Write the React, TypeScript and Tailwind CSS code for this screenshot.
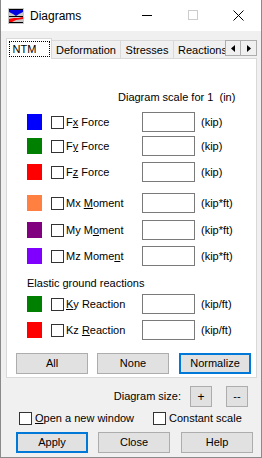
import React from "react";

const F = { fontFamily: '"Liberation Sans", Arial, sans-serif' };

function Check({ className = "" }: { className?: string }) {
  return <div className={"w-[13px] h-[13px] border border-[#333333] bg-white shrink-0 " + className} />;
}

function Btn({ children, def = false, className = "" }: { children: React.ReactNode; def?: boolean; className?: string }) {
  return (
    <div
      className={
        "h-[21px] w-[72px] flex items-center justify-center bg-[#e1e1e1] text-[11px] text-black shrink-0 " +
        (def ? "border-2 border-[#0078d7] " : "border border-[#adadad] ") +
        className
      }
    >
      {children}
    </div>
  );
}

function Row({
  color,
  label,
  unit,
  className = "",
}: {
  color: string;
  label: React.ReactNode;
  unit: string;
  className?: string;
}) {
  return (
    <div className={"flex items-center h-[20px] pl-[20px] " + className}>
      <div className="w-[15px] h-[16px] shrink-0" style={{ background: color }} />
      <Check className="ml-[9px]" />
      <div className="ml-[2px] w-[76px] text-[11px] leading-[14px] text-black whitespace-nowrap">{label}</div>
      <div className="w-[53px] h-[20px] border border-[#7a7a7a] bg-white shrink-0" />
      <div className="ml-[6px] text-[11px] text-black whitespace-nowrap">{unit}</div>
    </div>
  );
}

export default function App() {
  return (
    <div className="w-[262px] h-[458px] bg-[#f0f0f0] border-x border-b border-[#8a8a8a] flex flex-col overflow-hidden" style={F}>
      {/* Title bar */}
      <div className="h-[31px] bg-white flex items-center shrink-0 relative">
        <svg width="16" height="16" viewBox="0 0 16 16" className="ml-[7px]">
          <rect x="0" y="0" width="16" height="16" fill="#c8c8c8" />
          <polygon points="1,2 15,2 15,4 11,6 8,8 5,6 1,4" fill="#0000e0" />
          <rect x="1" y="8" width="14" height="1" fill="#000" />
          <rect x="1" y="1" width="14" height="1" fill="#000" />
          <polygon points="1,14 1,11 6,10 10,10 15,9 15,11 8,12 4,14" fill="#ff0000" />
          <rect x="1" y="14" width="14" height="1" fill="#000" />
        </svg>
        <div className="ml-[6px] text-[12px] text-black">Diagrams</div>
        <div className="absolute left-[141px] top-[15px] w-[10px] h-[1px] bg-black" />
        <div className="absolute left-[187px] top-[10px] w-[10px] h-[10px] border border-[#cccccc]" />
        <svg className="absolute left-[232px] top-[10px]" width="11" height="11" viewBox="0 0 11 11">
          <path d="M0.5 0.5 L10.5 10.5 M10.5 0.5 L0.5 10.5" stroke="#000" strokeWidth="1" />
        </svg>
      </div>

      {/* Tabs */}
      <div className="mt-[7px] ml-[5px] flex items-end h-[21px]">
        <div className="w-[219px] overflow-hidden flex items-end h-[21px]">
          <div className="h-[21px] w-[46px] shrink-0 bg-white border-t border-l border-r border-[#d9d9d9] flex items-center justify-center relative z-10">
            <div className="border border-dotted border-black px-[3px] h-[16px] w-[41px] flex items-center text-[11px] text-black">NTM</div>
          </div>
          <div className="h-[19px] w-[69px] shrink-0 bg-[#f0f0f0] border-t border-r border-[#d9d9d9] flex items-center justify-center text-[11px] text-black">Deformation</div>
          <div className="h-[19px] w-[53px] shrink-0 bg-[#f0f0f0] border-t border-r border-[#d9d9d9] flex items-center justify-center text-[11px] text-black">Stresses</div>
          <div className="h-[19px] w-[62px] shrink-0 bg-[#f0f0f0] border-t border-r border-[#d9d9d9] flex items-center pl-[4px] text-[11px] text-black whitespace-nowrap">Reactions</div>
        </div>
        <div className="flex self-start mt-[2px]">
          <div className="w-[16px] h-[16px] border border-[#adadad] bg-[#f0f0f0] flex items-center justify-center">
            <svg width="4" height="7" viewBox="0 0 4 7"><polygon points="4,0 0,3.5 4,7" fill="#000" /></svg>
          </div>
          <div className="w-[16px] h-[16px] border border-l-0 border-[#adadad] bg-[#f0f0f0] flex items-center justify-center">
            <svg width="4" height="7" viewBox="0 0 4 7"><polygon points="0,0 4,3.5 0,7" fill="#000" /></svg>
          </div>
        </div>
      </div>

      {/* Panel */}
      <div className="ml-[5px] w-[251px] h-[320px] -mt-[1px] bg-white border border-[#d9d9d9] flex flex-col shrink-0">
        <div className="mt-[31px] h-[14px] pl-[111px] text-[11px] leading-[14px] text-black whitespace-nowrap">
          Diagram scale for 1&nbsp;&nbsp;(in)
        </div>
        <Row className="mt-[8px]" color="#0000ff" label={<span>F<u>x</u> Force</span>} unit="(kip)" />
        <Row className="mt-[4px]" color="#008000" label={<span>F<u>y</u> Force</span>} unit="(kip)" />
        <Row className="mt-[6px]" color="#ff0000" label={<span>F<u>z</u> Force</span>} unit="(kip)" />
        <Row className="mt-[11px]" color="#ff8040" label={<span>Mx <u>M</u>oment</span>} unit="(kip*ft)" />
        <Row className="mt-[7px]" color="#800080" label={<span>My M<u>o</u>ment</span>} unit="(kip*ft)" />
        <Row className="mt-[6px]" color="#8000ff" label={<span>Mz Mome<u>n</u>t</span>} unit="(kip*ft)" />
        <div className="mt-[10px] h-[14px] pl-[20px] text-[11px] leading-[14px] text-black">Elastic ground reactions</div>
        <Row className="mt-[4px]" color="#008000" label={<span><u>K</u>y Reaction</span>} unit="(kip/ft)" />
        <Row className="mt-[6px]" color="#ff0000" label={<span>Kz <u>R</u>eaction</span>} unit="(kip/ft)" />
        <div className="mt-[13px] flex pl-[9px]">
          <Btn>All</Btn>
          <Btn className="ml-[9px]">None</Btn>
          <Btn def className="ml-[10px]">Normalize</Btn>
        </div>
      </div>

      {/* Diagram size */}
      <div className="mt-[8px] flex items-center h-[21px]">
        <div className="w-[180px] text-right text-[11px] text-black">Diagram size:</div>
        <div className="ml-[9px] w-[22px] h-[21px] border border-[#adadad] bg-[#e1e1e1] flex items-center justify-center text-[12px] text-black">+</div>
        <div className="ml-[14px] w-[22px] h-[21px] border border-[#adadad] bg-[#e1e1e1] flex items-center justify-center text-[11px] text-black">--</div>
      </div>

      {/* Checkboxes */}
      <div className="mt-[5px] flex items-center h-[13px]">
        <Check className="ml-[18px]" />
        <div className="ml-[3px] w-[118px] text-[11px] text-black whitespace-nowrap"><u>O</u>pen a new window</div>
        <Check />
        <div className="ml-[3px] text-[11px] text-black whitespace-nowrap">Constant scale</div>
      </div>

      {/* Bottom buttons */}
      <div className="mt-[7px] flex pl-[15px]">
        <Btn def>Apply</Btn>
        <Btn className="ml-[10px]">Close</Btn>
        <Btn className="ml-[11px]">Help</Btn>
      </div>
    </div>
  );
}
